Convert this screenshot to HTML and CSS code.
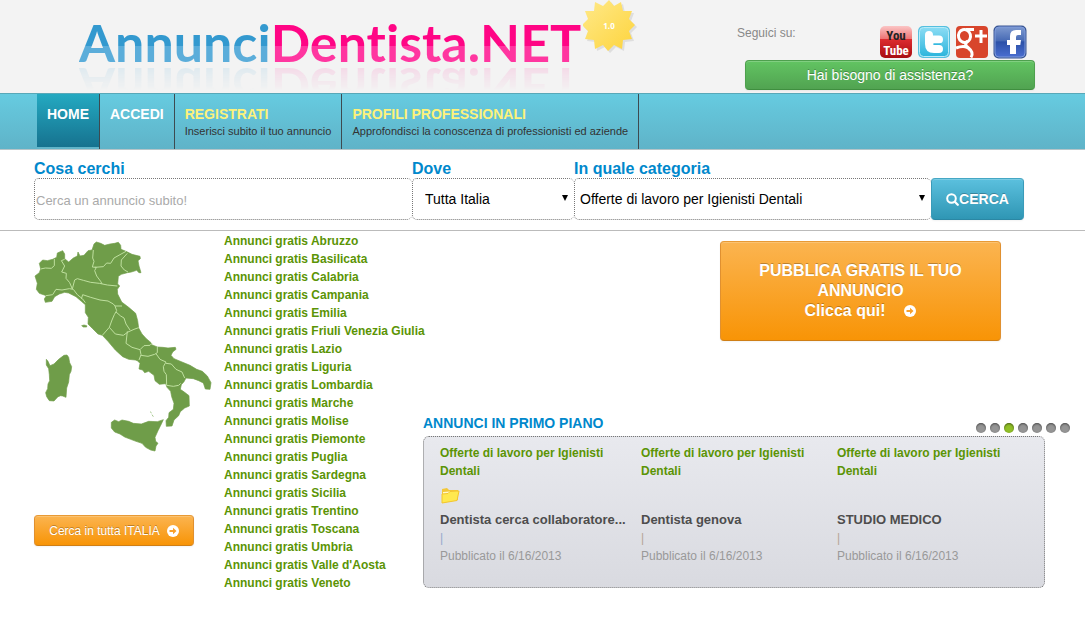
FILE: index.html
```html
<!DOCTYPE html>
<html lang="it">
<head>
<meta charset="utf-8">
<meta name="viewport" content="width=device-width, initial-scale=1">
<title>AnnunciDentista.NET</title>
<link rel="stylesheet" href="styles.css">
</head>
<body>
<header class="header">
  <a class="brand" href="#">
    <span class="logo"><span class="logo-blue">Annunci</span><span class="logo-pink">Dentista.NET</span></span>
    <svg class="badge" viewBox="0 0 54 54" aria-label="1.0" role="img">
      <defs><linearGradient id="sun" x1="0" y1="0" x2="1" y2="1"><stop offset="0" stop-color="#ffe98a"/><stop offset="1" stop-color="#fdd43c"/></linearGradient></defs>
      <path fill="#dedede" transform="translate(2 2)" d="M26 0l5 6 7-4 2 9 9 0-3 8 6 6-6 6 3 8-9 1-1 9-8-4-6 6-5-6-8 4-1-9-9-1 3-8-6-6 6-6-3-8 9 0 1-9 8 4z"/>
      <path fill="url(#sun)" d="M26 0l5 6 7-4 2 9 9 0-3 8 6 6-6 6 3 8-9 1-1 9-8-4-6 6-5-6-8 4-1-9-9-1 3-8-6-6 6-6-3-8 9 0 1-9 8 4z"/>
      <text class="badge-text" x="26" y="29" text-anchor="middle">1.0</text>
    </svg>
  </a>
  <div class="header-side">
    <div class="follow">
      <span>Seguici su:</span>
      <div class="social">
        <a href="#" aria-label="YouTube"><svg viewBox="0 0 34 34">
          <defs><linearGradient id="yt" x2="0" y2="1"><stop offset="0" stop-color="#fbc5c5"/><stop offset=".4" stop-color="#ee7474"/><stop offset=".42" stop-color="#dc2b2f"/><stop offset="1" stop-color="#a80d12"/></linearGradient></defs>
          <rect x="1" y="1" width="32" height="32" rx="5" fill="url(#yt)"/>
          <text class="yt" x="17" y="15" text-anchor="middle" fill="#222">You</text>
          <text class="yt" x="17" y="30" text-anchor="middle" fill="#fff">Tube</text></svg></a>
        <a href="#" aria-label="Twitter"><svg viewBox="0 0 34 34">
          <defs><linearGradient id="tw" x2="0" y2="1"><stop offset="0" stop-color="#8bdcf4"/><stop offset="1" stop-color="#2cb5dc"/></linearGradient></defs>
          <rect x="1" y="1" width="32" height="32" rx="5" fill="#55bfdf"/><rect x="2.500" y="2.500" width="29" height="29" rx="4" fill="url(#tw)" stroke="#b8ebf8"/>
          <path d="M12 10v9q0 5 5 5h5M12 14.500h10" fill="none" stroke="#fff" stroke-width="8" stroke-linecap="round" stroke-linejoin="round"/>
          <path d="M17 19.200h7" fill="none" stroke="#35b9df" stroke-width="1.500"/></svg></a>
        <a href="#" aria-label="Google+"><svg viewBox="0 0 34 34">
          <rect x="1" y="1" width="32" height="32" rx="4" fill="#d8452c"/>
          <g fill="none" stroke="#fff" stroke-width="3"><ellipse cx="9.500" cy="11" rx="6" ry="6.500" transform="rotate(-15 9.500 11)"/><path d="M11 4.500h8M13 16c-4 3-2 5 0 6.500 5 4 5 7 3 10M1 23c8-3 12-1 14 2"/><path d="M26 5v13M20 11h12"/></g></svg></a>
        <a href="#" aria-label="Facebook"><svg viewBox="0 0 34 34">
          <defs><linearGradient id="fb" x2="0" y2="1"><stop offset="0" stop-color="#7c98cf"/><stop offset=".45" stop-color="#486bb5"/><stop offset=".5" stop-color="#2c51a8"/><stop offset="1" stop-color="#4a6ed0"/></linearGradient></defs>
          <rect x="0.500" y="0.500" width="33" height="33" rx="5" fill="#3a5794"/><rect x="2" y="2" width="30" height="30" rx="4" fill="url(#fb)" stroke="#7f9bdc"/>
          <path fill="#fff" d="M28 5v5h-3q-2 0-2 2v3h5l-.7 5H23v9h-6v-9h-3v-5h3v-4q0-6 6-6z"/></svg></a>
      </div>
    </div>
    <button class="btn btn-help" type="button">Hai bisogno di assistenza?</button>
  </div>
</header>

<nav class="nav">
  <a class="nav-item active" href="#"><b>HOME</b></a>
  <a class="nav-item" href="#"><b>ACCEDI</b></a>
  <a class="nav-item hot" href="#"><b>REGISTRATI</b><small>Inserisci subito il tuo annuncio</small></a>
  <a class="nav-item hot" href="#"><b>PROFILI PROFESSIONALI</b><small>Approfondisci la conoscenza di professionisti ed aziende</small></a>
</nav>

<form class="search">
  <div class="field field-what">
    <label for="what">Cosa cerchi</label>
    <input id="what" type="text" placeholder="Cerca un annuncio subito!">
  </div>
  <div class="field field-where">
    <label for="where">Dove</label>
    <div class="select"><select id="where"><option>Tutta Italia</option></select></div>
  </div>
  <div class="field field-category">
    <label for="category">In quale categoria</label>
    <div class="select"><select id="category"><option>Offerte di lavoro per Igienisti Dentali</option></select></div>
  </div>
  <button class="btn btn-search" type="submit"><svg viewBox="0 0 13 13"><circle cx="5.500" cy="5.500" r="4.300" fill="none" stroke="#fff" stroke-width="2"/><path d="M8.800 8.800l3 3" stroke="#fff" stroke-width="2.200" stroke-linecap="round"/></svg>CERCA</button>
</form>

<main class="main">
  <section class="map-col">
    <svg class="map" viewBox="42 30 534 636" role="img" aria-label="Italia">
      <g fill="#6f9d49" stroke="#6f9d49" stroke-width="2" stroke-linejoin="round">
        <path d="M222 42L229 36 242 40 254 46 270 42 284 40 295 37 302 46 303 58 318 64 336 73 360 79 361 86 354 92 357 108 363 128 357 128 350 121 334 126 322 128 304 133 295 139 293 162 299 168 292 178 293 192 305 216 326 232 347 250 353 272 356 294 366 312 379 326 393 338 395 344 412 351 428 352 444 354 466 352 468 358 458 366 453 376 462 386 486 396 510 406 530 418 547 424 562 438 573 458 570 478 556 477 550 459 536 452 520 446 498 444 492 455 484 464 481 478 494 487 507 497 508 528 494 534 481 545 476 557 462 570 456 588 439 589 438 572 446 562 447 548 460 538 462 520 455 500 452 484 441 472 437 461 418 463 405 452 402 436 386 424 374 428 368 420 357 417 360 400 352 392 346 390 326 388 308 380 286 360 264 334 247 316 234 312 218 296 204 282 205 262 196 248 196 224 184 214 168 200 146 189 134 187 118 192 104 200 96 214 76 217 73 207 79 197 58 190 49 178 52 160 45 138 58 128 62 117 58 100 68 90 82 92 98 88 110 82 112 69 128 62 134 72 134 86 146 96 160 84 172 78 174 66 180 78 192 76 204 62 216 60Z"/>
        <path d="M79 388L84 394 90 407 102 402 116 388 132 376 141 375 146 382 149 398 155 410 153 424 148 434 146 456 140 474 138 502 128 498 122 497 114 500 102 513 88 512 80 500 77 488 83 476 84 462 89 452 88 434 86 416 79 405Z"/>
        <path d="M274 577L284 570 296 575 306 570 326 574 340 580 364 582 386 574 412 575 430 569 424 582 414 602 405 622 407 634 414 640 408 648 405 663 392 660 377 652 366 640 348 634 332 628 314 621 300 612 284 606 274 594Z"/>
        <path d="M185 287L192 285 200 287 200 291 190 291Z"/>
      </g>
      <path fill="none" stroke="#a4c78c" stroke-width="3" d="M390 545l5 4M396 554l4 6"/>
      <g fill="none" stroke="#bfe09f" stroke-width="3" stroke-linejoin="round">
        <path d="M62 117L76 114 94 115 103 107 103 87M134 88L124 92 134 108 125 126 139 130 138 145 149 158 157 177 164 150 172 146 190 151 212 157 238 160 262 165 292 168M220 60L218 84 222 94 217 111 229 112 224 122 230 138 242 154 246 162M224 112L250 110 260 99 272 100 282 84 300 74 318 64M322 70L304 90 303 108 313 120 324 126"/>
        <path d="M78 197L98 194 108 178 126 180 148 176 160 178 172 194 188 207 196 218M184 207L188 194 212 202 240 210 264 213 280 222 285 228 306 228M285 228L290 242 283 254 276 270 268 292 247 316M288 246L302 258 312 264 318 282 330 300M268 292L286 312 310 316 324 306 342 298 356 293M322 304L318 340 336 352 360 359 372 347 390 346 396 340M360 359L363 374 357 390M363 376L384 379 404 373 412 368 412 351M408 371L420 388 438 396 430 410 432 424 439 434 440 466M438 400L454 402 468 418 486 426 494 444M440 466L460 469 476 466 482 460"/>
      </g>
    </svg>
    <a class="btn btn-italy" href="#">Cerca in tutta ITALIA<svg class="arrow" viewBox="0 0 12 12"><circle cx="6" cy="6" r="6" fill="#fff"/><path fill="#f9a12b" d="M2.500 5h3.500V2.800L9.500 6 6 9.200V7H2.500z"/></svg></a>
  </section>

  <ul class="regions">
    <li><a href="#">Annunci gratis Abruzzo</a></li>
    <li><a href="#">Annunci gratis Basilicata</a></li>
    <li><a href="#">Annunci gratis Calabria</a></li>
    <li><a href="#">Annunci gratis Campania</a></li>
    <li><a href="#">Annunci gratis Emilia</a></li>
    <li><a href="#">Annunci gratis Friuli Venezia Giulia</a></li>
    <li><a href="#">Annunci gratis Lazio</a></li>
    <li><a href="#">Annunci gratis Liguria</a></li>
    <li><a href="#">Annunci gratis Lombardia</a></li>
    <li><a href="#">Annunci gratis Marche</a></li>
    <li><a href="#">Annunci gratis Molise</a></li>
    <li><a href="#">Annunci gratis Piemonte</a></li>
    <li><a href="#">Annunci gratis Puglia</a></li>
    <li><a href="#">Annunci gratis Sardegna</a></li>
    <li><a href="#">Annunci gratis Sicilia</a></li>
    <li><a href="#">Annunci gratis Trentino</a></li>
    <li><a href="#">Annunci gratis Toscana</a></li>
    <li><a href="#">Annunci gratis Umbria</a></li>
    <li><a href="#">Annunci gratis Valle d'Aosta</a></li>
    <li><a href="#">Annunci gratis Veneto</a></li>
  </ul>

  <section class="featured">
    <a class="btn btn-publish" href="#">
      <span>PUBBLICA GRATIS IL TUO ANNUNCIO</span>
      <span class="publish-line">Clicca qui!<svg class="arrow" viewBox="0 0 12 12"><circle cx="6" cy="6" r="6" fill="#fff"/><path fill="#f9a12b" d="M2.500 5h3.500V2.800L9.500 6 6 9.200V7H2.500z"/></svg></span>
    </a>
    <div class="featured-head">
      <h2>ANNUNCI IN PRIMO PIANO</h2>
      <div class="dots">
        <button type="button" aria-label="1"></button><button type="button" aria-label="2"></button><button class="on" type="button" aria-label="3"></button><button type="button" aria-label="4"></button><button type="button" aria-label="5"></button><button type="button" aria-label="6"></button><button type="button" aria-label="7"></button>
      </div>
    </div>
    <div class="cards">
      <article class="card">
        <a class="cat" href="#">Offerte di lavoro per Igienisti Dentali</a>
        <div class="thumb"><svg viewBox="0 0 20 18"><path d="M2 2l5-1 2 2 9 0v10L2 16z" fill="#f3c83a"/><path d="M3 5l14-1v8H3z" fill="#fff9cc"/><path d="M2 7l6-.5 2-2 9-.5-2 9.500L2 16z" fill="#ffe94f" stroke="#f3c62f"/></svg></div>
        <h3>Dentista cerca collaboratore...</h3>
        <span class="sep">|</span>
        <p>Pubblicato il 6/16/2013</p>
      </article>
      <article class="card">
        <a class="cat" href="#">Offerte di lavoro per Igienisti Dentali</a>
        <div class="thumb"></div>
        <h3>Dentista genova</h3>
        <span class="sep">|</span>
        <p>Pubblicato il 6/16/2013</p>
      </article>
      <article class="card">
        <a class="cat" href="#">Offerte di lavoro per Igienisti Dentali</a>
        <div class="thumb"></div>
        <h3>STUDIO MEDICO</h3>
        <span class="sep">|</span>
        <p>Pubblicato il 6/16/2013</p>
      </article>
    </div>
  </section>
</main>
</body>
</html>
```
FILE: styles.css
```css
* { box-sizing: border-box; }
body {
  margin: 0;
  background: #fff;
  color: #333;
  font: 12px/18px "Liberation Sans", Arial, sans-serif;
}
a { text-decoration: none; }
button, input, select { font-family: inherit; margin: 0; }

.btn {
  display: flex;
  align-items: center;
  justify-content: center;
  border: 1px solid;
  border-radius: 4px;
  color: #fff;
  text-shadow: 0 -1px 0 rgba(0, 0, 0, .25);
  box-shadow: inset 0 1px 0 rgba(255, 255, 255, .2), 0 1px 2px rgba(0, 0, 0, .05);
  cursor: pointer;
}
.arrow { width: 12px; height: 12px; }

/* header */
.header {
  display: flex;
  justify-content: space-between;
  height: 93px;
  padding: 0 50px 0 79px;
  background: #f3f3f3;
}
.brand { display: flex; align-items: flex-start; gap: 2px; }
.logo {
  margin-top: 20px;
  font: 700 52px/44px Lato, sans-serif;
  font-variant-ligatures: none;
  white-space: nowrap;
  -webkit-box-reflect: below 2px linear-gradient(transparent 45%, rgba(0, 0, 0, .14));
}
.logo-blue, .logo-pink {
  display: inline-block;
  color: transparent;
  -webkit-background-clip: text;
  background-clip: text;
}
.logo-blue { background-image: linear-gradient(#3399cf 58%, #5badda 58%); }
.logo-pink { background-image: linear-gradient(#ff0585 58%, #ff36a0 58%); }
.badge { width: 54px; height: 54px; }
.badge-text { font: 700 8px "Open Sans", sans-serif; fill: #fff; }
.header-side { width: 298px; padding-top: 25px; }
.follow {
  display: flex;
  justify-content: space-between;
  height: 35px;
  padding-right: 8px;
  font-size: 12px;
  line-height: 16px;
  color: #888;
}
.social { display: flex; gap: 4px; }
.social svg { display: block; width: 34px; height: 34px; }
.yt { font: 700 13px "Roboto Condensed", Roboto, sans-serif; }
.btn-help {
  width: 290px;
  height: 30px;
  margin-left: 8px;
  font-size: 14px;
  border-color: #4ea04e #4ea04e #3f8f3f;
  background: linear-gradient(#62c462, #51a351);
}

/* navigation */
.nav {
  display: flex;
  height: 57px;
  padding-left: 37px;
  border-top: 1px solid #58a8b8;
  border-bottom: 1px solid #b5c5c9;
  background: linear-gradient(#66cbe0, #5fb3c8);
}
.nav-item {
  display: flex;
  flex-direction: column;
  padding: 11px 10px 0;
  border-right: 1px solid #3d4a50;
  color: #fff;
  font-size: 14px;
  line-height: 18px;
  white-space: nowrap;
}
.nav-item small { font-size: 11px; line-height: 16px; color: #333; }
.nav-item.active { background: linear-gradient(#24a9c1, #16728f) 0 0 / 100% 53px no-repeat; }
.hot { color: #fdf27a; }

/* search */
.search {
  display: flex;
  align-items: flex-end;
  padding: 9px 61px 10px 34px;
  border-bottom: 1px solid #bbb;
}
.field { min-width: 0; }
.field-what { flex: 378 1 0; }
.field-where { flex: 162 1 0; }
.field-category { flex: 357 1 0; }
.field label {
  display: block;
  font-size: 16px;
  line-height: 19px;
  font-weight: 700;
  color: #08c;
}
.field input, .select select {
  display: block;
  width: 100%;
  height: 42px;
  border: 1px dotted #777;
  border-radius: 5px;
  background: #fff;
  color: #000;
  font-size: 14px;
}
.field input { padding: 2px 1px 0; border-right: 0; font-size: 13px; }
.field input::placeholder { color: #aaa; }
.select { position: relative; }
.select select { appearance: none; padding: 0 24px 0 12px; }
.field-category select { padding-left: 5px; border-right: 0; }
.field-where select { border-right: 0; }
.select::after {
  content: "";
  position: absolute;
  right: 6px;
  top: 17px;
  border: 3px solid transparent;
  border-top: 6px solid #000;
  border-bottom: 0;
  pointer-events: none;
}
.btn-search {
  flex: 0 0 93px;
  height: 42px;
  padding: 0;
  font-size: 14px;
  font-weight: 700;
  border-color: #45a7c4 #3a9bb9 #2b87a4;
  background: linear-gradient(#5bc0de, #2f96b4);
}
.btn-search svg { width: 13px; height: 13px; }

/* content */
.main {
  display: grid;
  grid-template-columns: 190px 199px 1fr;
  padding: 1px 0 46px 34px;
}
.map-col { padding-top: 8px; }
.map { display: block; width: 178px; height: 212px; }
.btn-italy {
  width: 160px;
  height: 31px;
  margin-top: 63px;
  gap: 7px;
}
.btn-italy, .btn-publish {
  border-color: #e89a35 #e09030 #cf7f16;
  background: linear-gradient(#fbb450, #f89406);
}
.regions {
  margin: 0;
  padding: 0;
  list-style: none;
  font-weight: 700;
  white-space: nowrap;
}
.regions a, .cat { color: #5b9405; }
.featured { padding-top: 9px; }
.btn-publish {
  flex-direction: column;
  width: 281px;
  height: 100px;
  margin: 0 84px 0 auto;
  padding: 0 30px;
  font-size: 16px;
  line-height: 20px;
  font-weight: 700;
  text-align: center;
}
.publish-line { display: flex; align-items: center; gap: 19px; }
.featured-head {
  display: flex;
  justify-content: space-between;
  align-items: flex-end;
  margin-top: 72px;
  padding-right: 15px;
}
.featured-head h2 { margin: 0; font-size: 14px; line-height: 20px; color: #08c; padding-bottom: 3px; }
.dots { display: flex; gap: 4px; padding-bottom: 3px; }
.dots button {
  width: 10px;
  height: 10px;
  padding: 0;
  border: 0;
  border-radius: 50%;
  background: #959595;
  box-shadow: inset 0 1px 2px rgba(0, 0, 0, .5);
}
.dots .on { background: #90bf27; }
.cards {
  display: grid;
  grid-template-columns: 201px 196px 1fr;
  margin-right: 40px;
  padding: 7px 16px 22px;
  border: 1px dotted #777;
  border-radius: 6px;
  background: linear-gradient(#e8e9ee, #d9dae0);
}
.card { line-height: 18px; }
.cat { display: block; max-width: 180px; font-weight: 700; }
.thumb { height: 31px; padding-top: 7px; }
.thumb svg { display: block; width: 20px; height: 18px; }
.card h3 { margin: 0; font-size: 13px; line-height: 18px; color: #4d4d4d; white-space: nowrap; }
.sep { display: block; color: #b5a596; }
.card:first-child .sep { color: #94a9cc; }
.card p { margin: 0; color: #999; }
```
